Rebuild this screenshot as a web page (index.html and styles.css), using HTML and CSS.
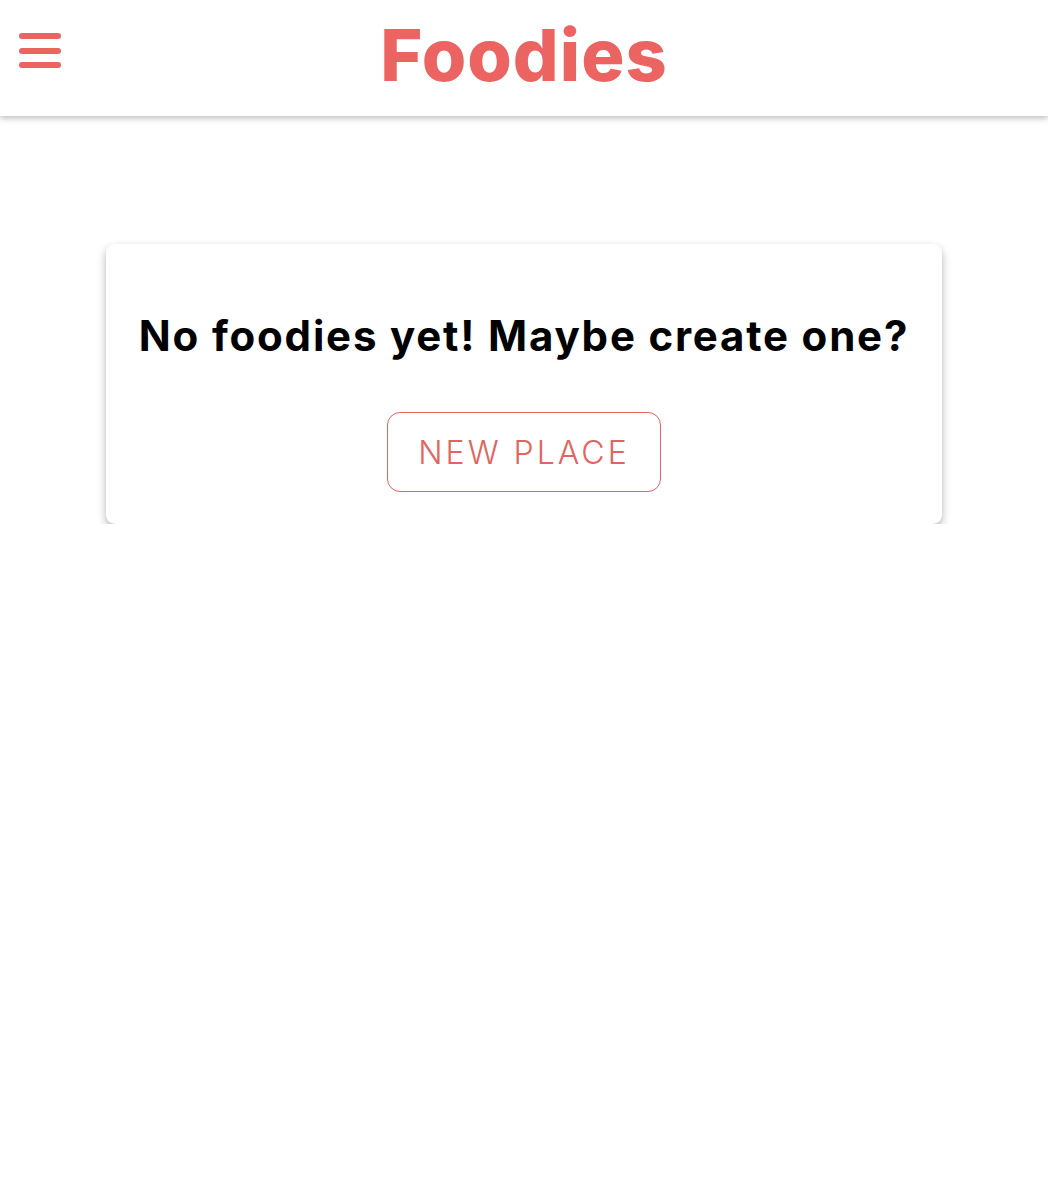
FILE: index.html
```html
<!DOCTYPE html>
<html>
<head>
<meta charset="utf-8">
<link rel="stylesheet" href="styles.css">
</head>
<body>
<header class="topbar">
  <button class="menu" aria-label="menu">
    <svg width="44" height="40" viewBox="0 0 44 40"><rect x="1" y="2" width="42" height="6" rx="3"/><rect x="1" y="17" width="42" height="6" rx="3"/><rect x="1" y="31" width="42" height="6" rx="3"/></svg>
  </button>
  <h1 class="brand">Foodies</h1>
</header>
<main class="content">
  <section class="card">
    <h2 class="empty">No foodies yet! Maybe create one?</h2>
    <a class="btn">NEW PLACE</a>
  </section>
</main>
</body>
</html>
```
FILE: styles.css
```css
* { box-sizing: border-box; }
html, body { margin: 0; background: #fff; }
body { font-family: "Inter", "Open Sans", sans-serif; }
.topbar {
  height: 116px;
  display: flex;
  align-items: center;
  justify-content: center;
  position: relative;
  background: #fff;
  box-shadow: 0 2px 6px rgba(0,0,0,0.28);
}
.menu {
  position: absolute;
  left: 18px;
  top: 31px;
  padding: 0;
  border: 0;
  background: none;
  display: block;
}
.menu svg { display: block; fill: #ec6461; }
.brand {
  margin: 0;
  margin-top: -8px;
  color: #ec6461;
  font-size: 72px;
  font-weight: 800;
  letter-spacing: 1px;
}
.content { padding: 128px 106px 0; }
.card {
  background: #fff;
  border-radius: 9px;
  box-shadow: 0 4px 9px rgba(0,0,0,0.3);
  height: 280px;
  display: flex;
  flex-direction: column;
  align-items: center;
  padding-top: 62px;
}
.empty {
  margin: 0;
  font-size: 42px;
  font-weight: 700;
  color: #000;
  letter-spacing: 1.8px;
  line-height: 60px;
}
.btn {
  margin-top: 46px;
  width: 274px;
  height: 80px;
  border: 1px solid #e16461;
  border-radius: 13px;
  color: #e16461;
  display: flex;
  align-items: center;
  justify-content: center;
  font-size: 32px;
  font-weight: 300;
  letter-spacing: 3px;
}
```
